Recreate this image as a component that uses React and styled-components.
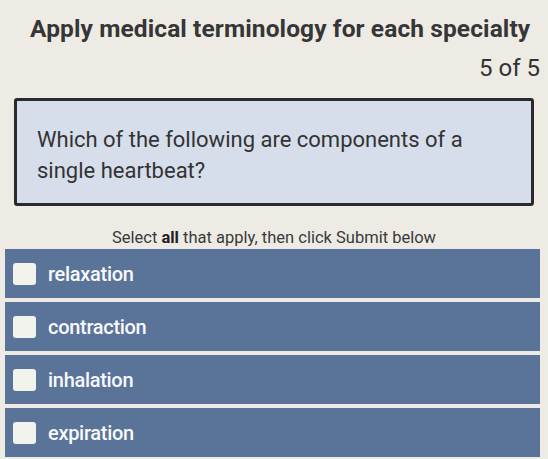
import React from 'react';
import styled, { createGlobalStyle } from 'styled-components';

const GlobalStyle = createGlobalStyle`
  html, body {
    margin: 0;
    padding: 0;
    background: #eeebe5;
  }
  body {
    font-family: Roboto, "Liberation Sans", sans-serif;
  }
`;

const options = ['relaxation', 'contraction', 'inhalation', 'expiration'];

const App = () => {
  return (
    <Page>
      <GlobalStyle />
      <Header>
        <Title>Apply medical terminology for each specialty</Title>
        <Counter>5 of 5</Counter>
      </Header>
      <QuestionBox>
        Which of the following are components of a single heartbeat?
      </QuestionBox>
      <Hint>
        Select <b>all</b> that apply, then click Submit below
      </Hint>
      <OptionList>
        {options.map((label) => (
          <Option key={label}>
            <Check />
            <span>{label}</span>
          </Option>
        ))}
      </OptionList>
    </Page>
  );
};

const Page = styled.div`
  width: 548px;
  height: 459px;
  overflow: hidden;
  display: flex;
  flex-direction: column;
  color: #2e2e2e;
`;

const Header = styled.header`
  display: flex;
  flex-direction: column;
  align-items: flex-end;
  padding: 14px 8px 0 30px;
`;

const Title = styled.h1`
  margin: 0;
  font-size: 24.5px;
  font-weight: 700;
  line-height: 30px;
  letter-spacing: 0.1px;
  color: #363636;
  align-self: flex-start;
`;

const Counter = styled.div`
  font-size: 24px;
  line-height: 28px;
  margin-top: 10px;
  color: #333;
`;

const QuestionBox = styled.section`
  margin: 16px 14px 0 14px;
  height: 108px;
  box-sizing: border-box;
  border: 3px solid #2b2b2d;
  border-radius: 3px;
  background: #d5deea;
  padding: 23px 60px 0 20px;
  font-size: 22px;
  line-height: 31px;
  color: #333;
`;

const Hint = styled.p`
  margin: 23px 0 0 0;
  text-align: center;
  font-size: 16.5px;
  line-height: 18px;
  color: #3a3a3a;

  b {
    font-weight: 700;
    color: #222;
  }
`;

const OptionList = styled.div`
  display: flex;
  flex-direction: column;
  gap: 4px;
  margin: 2px 8px 0 5px;
`;

const Option = styled.div`
  height: 49px;
  display: flex;
  align-items: center;
  gap: 12px;
  padding-left: 8px;
  background: #5a7399;
  color: #f8f9fb;
  font-size: 20px;
  font-weight: 500;
  letter-spacing: -0.3px;
`;

const Check = styled.span`
  width: 23px;
  height: 22px;
  border-radius: 3px;
  background: #f3f3ee;
  flex: none;
`;

export default App;
